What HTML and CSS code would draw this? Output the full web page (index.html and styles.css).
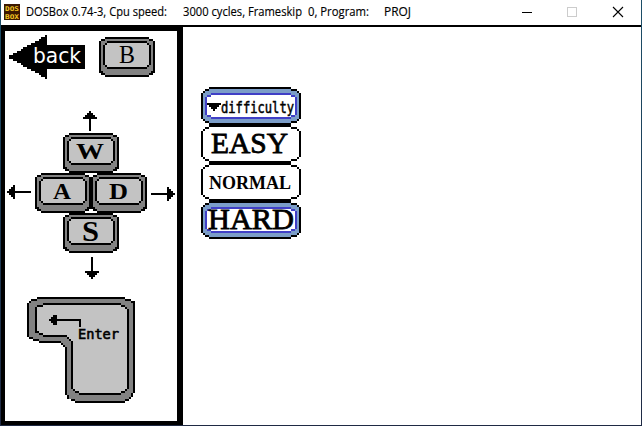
FILE: index.html
```html
<!DOCTYPE html>
<html lang="en">
<head>
<meta charset="utf-8">
<title>DOSBox 0.74-3</title>
<link rel="stylesheet" href="styles.css">
</head>
<body>
<svg class="defs" width="0" height="0">
  <symbol id="key" viewBox="0 0 28 20">
    <path d="M3 0H25V1H27V2H28V18H27V19H25V20H3V19H1V18H0V2H1V1H3Z"/>
    <path class="edge" d="M3 1H25V2H27V17H26V18H25V19H3V18H2V17H1V2H3Z"/>
    <path d="M4 2H24V3H25V4H26V14H25V15H24V16H4V15H3V14H2V4H3V3H4Z"/>
    <path class="face" d="M4 3H24V4H25V14H24V15H4V14H3V4H4Z"/>
  </symbol>
  <symbol id="box" viewBox="0 0 50 19">
    <path d="M4 0H45V1H48V2H49V3H50V16H49V17H48V18H45V19H4V18H2V17H1V16H0V3H1V2H2V1H4Z"/>
    <path class="fill" d="M4 1H45V2H48V3H49V16H48V17H45V18H4V17H2V16H1V3H2V2H4Z"/>
  </symbol>
  <symbol id="ring" viewBox="0 0 50 19">
    <path class="violet" d="M5 3H45V4H47V5H48V14H47V15H45V16H5V15H3V14H2V5H3V4H5Z"/>
    <path class="white" d="M5 4H45V5H47V14H45V15H5V14H3V5H5Z"/>
  </symbol>
</svg>
<div class="window">
  <header class="titlebar">
    <svg class="logo" viewBox="0 0 16 16">
      <rect width="16" height="16"/>
      <text x="1" y="7" textLength="14" lengthAdjust="spacingAndGlyphs">DOS</text>
      <text x="1" y="15" textLength="14" lengthAdjust="spacingAndGlyphs">BOX</text>
    </svg>
    <svg class="caption" width="400" height="25">
      <text x="0" y="16" textLength="141" lengthAdjust="spacingAndGlyphs">DOSBox 0.74-3, Cpu speed:</text>
      <text x="157" y="16" textLength="119" lengthAdjust="spacingAndGlyphs">3000 cycles, Frameskip</text>
      <text x="282" y="16" textLength="61" lengthAdjust="spacingAndGlyphs">0, Program:</text>
      <text x="358" y="16" textLength="27" lengthAdjust="spacingAndGlyphs">PROJ</text>
    </svg>
    <svg class="controls" width="102" height="25">
      <path class="min" d="M0 12.5H10"/>
      <rect class="max" x="45.5" y="7.5" width="9" height="9"/>
      <path class="close" d="M91 7L101 17M101 7L91 17"/>
    </svg>
  </header>
  <main class="screen">
    <aside class="panel">
      <div class="row-back">
        <svg class="back" width="76" height="44" viewBox="0 0 76 44">
          <path transform="scale(2)" d="M18 0H19V5H38V17H19V22H18V21H16V20H15V19H13V18H11V17H9V16H7V15H6V14H4V13H2V12H0V10H2V9H4V8H6V7H7V6H9V5H11V4H13V3H15V2H16V1H18Z"/>
          <text x="24" y="28" textLength="48" lengthAdjust="spacingAndGlyphs">back</text>
        </svg>
        <svg class="key key-b" width="56" height="40"><use href="#key" width="56" height="40"/><text class="thin" x="20" y="26" textLength="16" lengthAdjust="spacingAndGlyphs">B</text></svg>
      </div>
      <div class="pad">
        <svg class="up" width="14" height="20" viewBox="0 0 7 10"><path d="M3 0H4V1H5V2H6V3H7V4H4V10H3V4H0V3H1V2H2V1H3Z"/></svg>
        <svg class="key w" width="56" height="40"><use href="#key" width="56" height="40"/><text x="13" y="26" textLength="28" lengthAdjust="spacingAndGlyphs">W</text></svg>
        <div class="middle">
          <svg class="left" width="24" height="14" viewBox="0 0 12 7"><path d="M0 3H1V2H2V1H3V0H4V3H12V4H4V7H3V6H2V5H1V4H0Z"/></svg>
          <svg class="key" width="56" height="40"><use href="#key" width="56" height="40"/><text x="18" y="26" textLength="18" lengthAdjust="spacingAndGlyphs">A</text></svg>
          <svg class="key" width="56" height="40"><use href="#key" width="56" height="40"/><text x="18" y="26" textLength="19" lengthAdjust="spacingAndGlyphs">D</text></svg>
          <svg class="right" width="24" height="14" viewBox="0 0 12 7"><path d="M12 3H11V2H10V1H9V0H8V3H0V4H8V7H9V6H10V5H11V4H12Z"/></svg>
        </div>
        <svg class="key s" width="56" height="40"><use href="#key" width="56" height="40"/><text class="tall" x="19" y="28" textLength="17" lengthAdjust="spacingAndGlyphs">S</text></svg>
        <svg class="down" width="14" height="22" viewBox="0 0 7 11"><path d="M3 0H4V7H7V8H6V9H5V10H4V11H3V10H2V9H1V8H0V7H3Z"/></svg>
      </div>
      <svg class="enter" width="108" height="106" viewBox="0 0 108 106">
        <g transform="scale(2)">
          <path d="M5 0H49V1H52V2H54V48H53V50H52V51H51V52H49V53H24V52H22V51H20V49H19V25H18V24H17V23H6V22H3V21H1V20H0V3H1V2H2V1H5Z"/>
          <path class="edge" d="M5 1H49V2H52V3H53V48H52V50H51V51H49V52H24V51H21V49H20V25H19V24H18V23H17V22H6V21H3V20H1V3H2V2H5Z"/>
          <path d="M8 3H47V4H49V5H50V6H51V46H50V47H49V48H47V49H26V48H24V47H23V46H22V22H21V21H20V20H8V19H6V18H4V5H5V4H8Z"/>
          <path class="face" d="M8 4H47V5H49V6H50V46H49V47H47V48H26V47H24V46H23V22H22V21H21V20H20V19H8V18H6V17H5V5H8Z"/>
          <path d="M11 11H12V10H13V9H15V11H27V15H26V12H15V14H13V13H12V12H11Z"/>
        </g>
        <text x="51" y="42" textLength="41" lengthAdjust="spacingAndGlyphs">Enter</text>
      </svg>
    </aside>
    <nav class="menu">
      <svg class="item blue" width="100" height="38"><use href="#box" width="100" height="38"/><use href="#ring" width="100" height="38"/><path d="M6 16H20V18H18V20H16V22H14V24H12V22H10V20H8V18H6Z"/><text class="pixel" x="20" y="26" textLength="73" lengthAdjust="spacingAndGlyphs">difficulty</text></svg>
      <svg class="item" width="100" height="38"><use href="#box" width="100" height="38"/><text class="large" x="10" y="28" textLength="77" lengthAdjust="spacingAndGlyphs">EASY</text></svg>
      <svg class="item" width="100" height="38"><use href="#box" width="100" height="38"/><text class="small" x="8" y="26" textLength="82" lengthAdjust="spacingAndGlyphs">NORMAL</text></svg>
      <svg class="item blue" width="100" height="38"><use href="#box" width="100" height="38"/><use href="#ring" width="100" height="38"/><text class="large" x="7" y="28" textLength="86" lengthAdjust="spacingAndGlyphs">HARD</text></svg>
    </nav>
  </main>
</div>
</body>
</html>
```
FILE: styles.css
```css
* { box-sizing: border-box; }
body {
  margin: 0;
  width: 642px;
  height: 426px;
  padding: 0 1px 1px;
  background: linear-gradient(#1c4e68, #1f2a44);
  overflow: hidden;
}
svg { display: block; flex: none; overflow: visible; shape-rendering: crispEdges; }
.defs { position: absolute; }
.window { width: 640px; height: 425px; background: #fff; }

.titlebar { display: flex; height: 25px; padding-left: 3px; }
.logo { width: 16px; height: 16px; margin-top: 4px; }
.logo rect { fill: #3c1800; }
.logo text { font: bold 6.5px "DejaVu Sans Mono", monospace; fill: #f3c623; }
.caption { margin-left: 6px; }
.caption text { font: 12px "Open Sans", sans-serif; fill: #000; stroke: #000; stroke-width: .15px; }
.controls { margin-left: 96px; fill: none; stroke: #000; }
.controls .max { stroke: #ccc; }
.controls .close { shape-rendering: auto; stroke-width: 1.1; }

.screen {
  display: flex;
  height: 400px;
  background: linear-gradient(#000 2px, transparent 2px);
}
.panel {
  width: 182px;
  border: solid #000;
  border-width: 6px 6px 4px 4px;
}
.row-back { display: flex; padding: 4px 0 0 4px; }
.back text { font: 21px "DejaVu Sans", sans-serif; fill: #fff; }
.key-b { margin: 2px 0 0 14px; }
.edge { fill: #828282; }
.face { fill: #c3c3c3; }
.key text { font: bold 24px "Liberation Serif", serif; }
.key .thin { font-weight: normal; font-size: 26px; }
.key .tall { font-size: 29px; }

.pad { padding-top: 32px; }
.up { margin: 0 0 2px 78px; }
.w, .s { margin-left: 58px; }
.middle { display: flex; padding-left: 2px; }
.left { margin: 12px 4px 0 0; }
.right { margin: 14px 0 0 4px; }
.down { margin: 4px 0 0 80px; }
.enter { margin: 18px 0 0 22px; }
.enter text { font: 13.5px "DejaVu Sans Mono", monospace; stroke: #000; stroke-width: .6px; }

.menu { padding: 62px 0 0 18px; }
.white { fill: #fff; }
.item { --box: #fff; }
.blue { --box: #7b9dc8; }
.fill { fill: var(--box); }
.violet { fill: #403fc6; }
.pixel { font: 15px "DejaVu Sans Mono", monospace; stroke: #000; stroke-width: .5px; }
.large { font: 29px "Liberation Serif", serif; stroke: #000; stroke-width: .8px; }
.small { font: bold 18px "Liberation Serif", serif; }
```
